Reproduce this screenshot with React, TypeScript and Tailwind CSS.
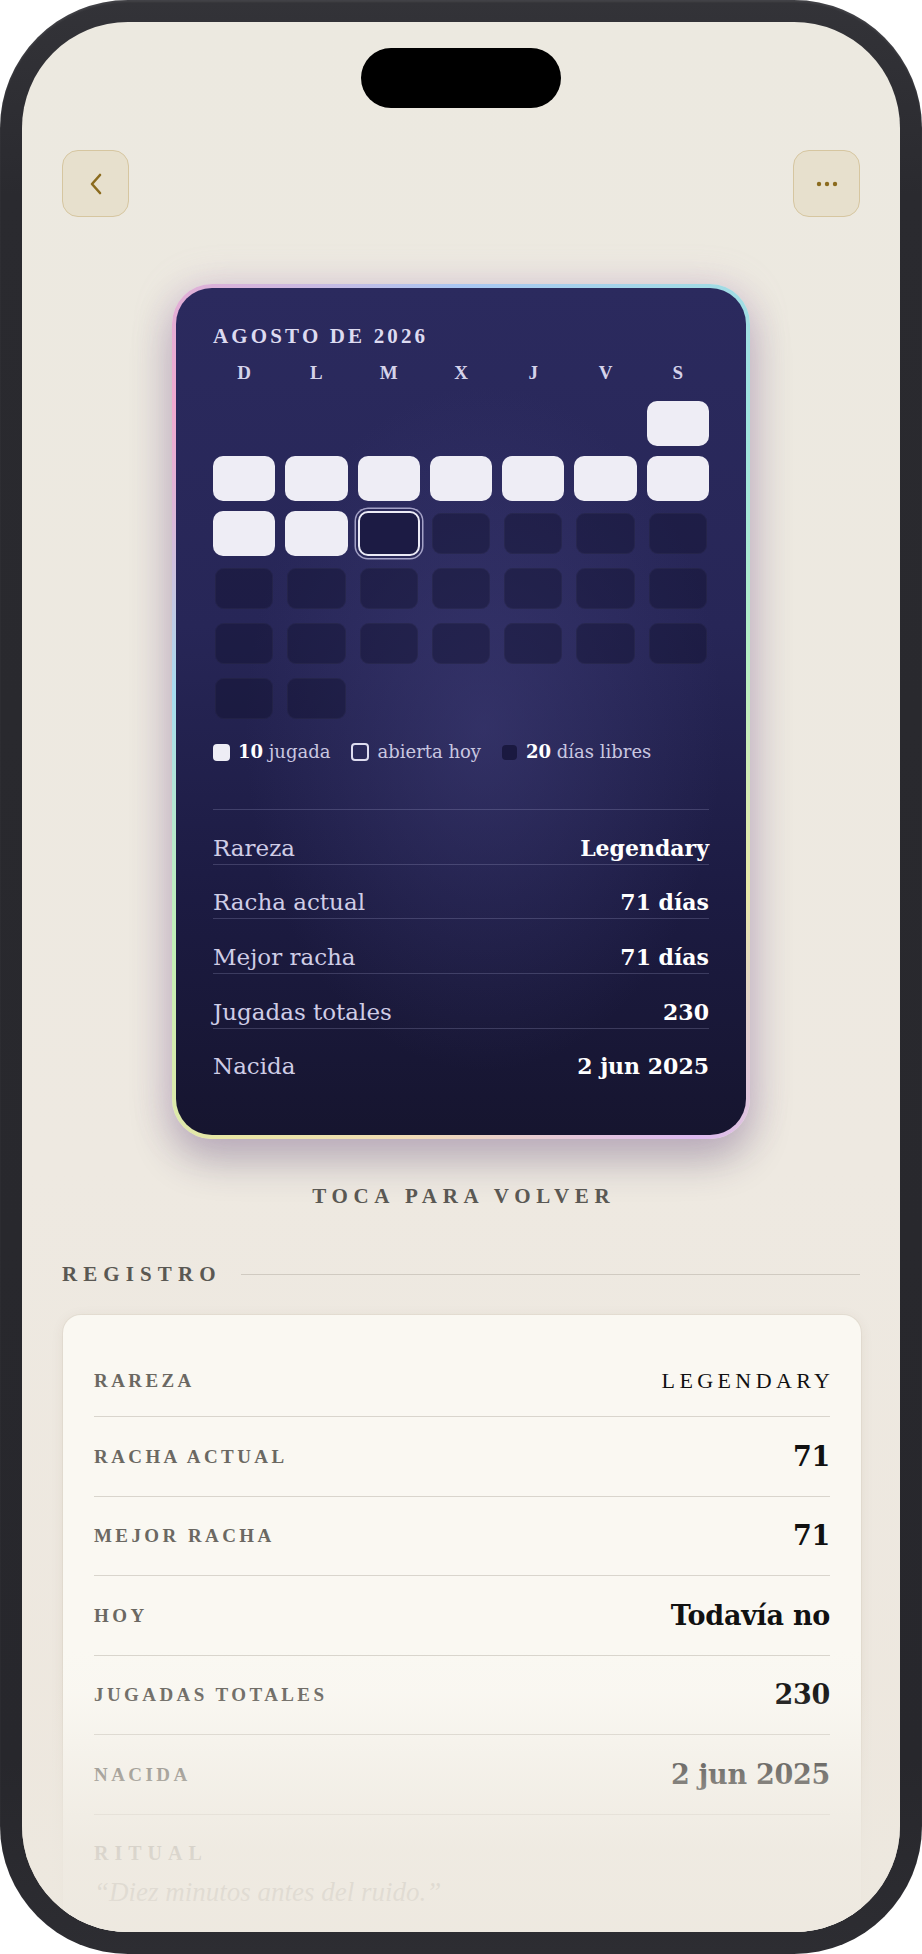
import React from "react";

type Cell = "empty" | "played" | "today" | "free";

const cells: Cell[] = [];
for (let i = 0; i < 6; i++) cells.push("empty");
for (let d = 1; d <= 31; d++) cells.push(d <= 10 ? "played" : d === 11 ? "today" : "free");

const dayLetters = ["D", "L", "M", "X", "J", "V", "S"];

const stats = [
  ["Rareza", "Legendary"],
  ["Racha actual", "71 días"],
  ["Mejor racha", "71 días"],
  ["Jugadas totales", "230"],
  ["Nacida", "2 jun 2025"],
];

const registro = [
  ["RAREZA", "LEGENDARY"],
  ["RACHA ACTUAL", "71"],
  ["MEJOR RACHA", "71"],
  ["HOY", "Todavía no"],
  ["JUGADAS TOTALES", "230"],
  ["NACIDA", "2 jun 2025"],
];

function CalCell({ kind }: { kind: Cell }) {
  if (kind === "empty") return <div />;
  if (kind === "played") return <div className="rounded-[10px] bg-[#eeedf5]" />;
  if (kind === "today")
    return (
      <div className="rounded-[10px] border-2 border-[#ecebf6] bg-[#1c1b44] shadow-[0_0_0_2px_#2a295a,0_0_0_3.5px_rgba(205,203,235,0.75)]" />
    );
  return (
    <div className="m-[2px] rounded-[9px] bg-[rgba(14,14,42,0.4)] shadow-[inset_0_0_0_1px_rgba(255,255,255,0.03)]" />
  );
}

export default function App() {
  return (
    <div className="w-[922px] h-[1954px] bg-white">
      <div className="w-[922px] h-[1954px] rounded-[128px] bg-[linear-gradient(180deg,#333338_0%,#2a2a2f_10%,#27272c_90%,#2d2d32_100%)] p-[22px] shadow-[inset_0_2px_2px_rgba(255,255,255,0.08)]">
        <div className="relative h-full w-full overflow-hidden rounded-[106px] bg-[linear-gradient(180deg,#ece9e0_0%,#eee9e1_60%,#ede7de_100%)]">
          {/* dynamic island */}
          <div className="mx-auto mt-[26px] h-[60px] w-[200px] rounded-full bg-black" />

          {/* header buttons */}
          <div className="mt-[42px] flex justify-between px-[40px]">
            <div className="flex h-[67px] w-[67px] items-center justify-center rounded-[16px] border-[1.5px] border-[#d6c6a0] bg-[#e7e0cd]">
              <svg width="14" height="22" viewBox="0 0 14 22" fill="none">
                <path d="M11 2 L3 11 L11 20" stroke="#8b6b1e" strokeWidth="2.6" strokeLinecap="round" strokeLinejoin="round" />
              </svg>
            </div>
            <div className="flex h-[67px] w-[67px] items-center justify-center rounded-[16px] border-[1.5px] border-[#d6c6a0] bg-[#e7e0cd]">
              <svg width="22" height="6" viewBox="0 0 22 6" fill="#8b6b1e">
                <circle cx="3" cy="3" r="2.2" />
                <circle cx="11" cy="3" r="2.2" />
                <circle cx="19" cy="3" r="2.2" />
              </svg>
            </div>
          </div>

          {/* flipped card */}
          <div className="mx-auto mt-[67px] h-[855px] w-[578px] rounded-[40px] p-[4px] bg-[conic-gradient(from_0deg,#a9c6f3,#9fe3e0_12%,#b6efc4_22%,#e9e8a8_34%,#dcb9ef_42%,#f1dcb6_52%,#e9e6a6_58%,#c2f0b6_64%,#a6dcf0_76%,#f0a9cf_88%,#a9c6f3)] shadow-[0_0_36px_rgba(205,165,215,0.35),0_20px_40px_rgba(55,40,85,0.32)]">
            <div className="h-full w-full rounded-[36px] bg-[radial-gradient(ellipse_at_54%_52%,rgba(70,68,130,0.45)_0%,rgba(70,68,130,0)_55%),linear-gradient(180deg,#2b2a5e_0%,#272657_40%,#1c1b42_72%,#16152f_100%)] px-[37px] pt-[38px]">
              <div className="font-['Liberation_Serif',serif] text-[21px] font-bold leading-none tracking-[0.15em] text-[#dddbf0]">
                AGOSTO DE 2026
              </div>
              <div className="mt-[16px] grid grid-cols-7 gap-x-[10px]">
                {dayLetters.map((d) => (
                  <div key={d} className="text-center font-['Liberation_Serif',serif] text-[19px] font-bold leading-none text-[#d5d3ea]">
                    {d}
                  </div>
                ))}
              </div>
              <div className="mt-[19px] grid grid-cols-7 auto-rows-[45px] gap-[10px]">
                {cells.map((c, i) => (
                  <CalCell key={i} kind={c} />
                ))}
              </div>

              {/* legend */}
              <div className="mt-[21px] flex h-[20px] items-center gap-x-[21px] font-['DejaVu_Serif',serif] text-[18px] leading-none text-[#c9c7e0]">
                <div className="flex items-center gap-x-[8px]">
                  <span className="h-[17px] w-[17px] rounded-[4px] bg-[#eeedf5]" />
                  <span>
                    <b className="font-bold text-white">10</b> jugada
                  </span>
                </div>
                <div className="flex items-center gap-x-[8px]">
                  <span className="h-[18px] w-[18px] rounded-[4px] border-2 border-[#dedcef]" />
                  <span>abierta hoy</span>
                </div>
                <div className="flex items-center gap-x-[9px]">
                  <span className="h-[15px] w-[15px] rounded-[4px] bg-[#1a1940]" />
                  <span>
                    <b className="font-bold text-white">20</b> días libres
                  </span>
                </div>
              </div>

              {/* stats */}
              <div className="mt-[47px] h-px bg-[rgba(200,200,240,0.2)]" />
              {stats.map(([k, v], i) => (
                <div
                  key={k}
                  className={
                    i < stats.length - 1
                      ? "flex h-[54.7px] items-baseline justify-between border-b border-[rgba(200,200,240,0.2)] pt-[26.6px]"
                      : "flex h-[54.7px] items-baseline justify-between pt-[26.6px]"
                  }
                >
                  <span className="font-['DejaVu_Serif',serif] text-[23px] leading-none text-[#cfcde6]">{k}</span>
                  <span className="font-['DejaVu_Serif',serif] text-[22px] font-bold leading-none text-white">{v}</span>
                </div>
              ))}
            </div>
          </div>

          <div className="mt-[47px] pl-[0.26em] text-center font-['Liberation_Serif',serif] text-[21px] font-bold leading-none tracking-[0.27em] text-[#5a5853]">
            TOCA PARA VOLVER
          </div>

          {/* registro header */}
          <div className="mt-[57px] flex items-center gap-x-[19px] px-[40px]">
            <span className="font-['Liberation_Serif',serif] text-[21px] font-bold leading-none tracking-[0.29em] text-[#5a5853]">
              REGISTRO
            </span>
            <div className="h-[1.5px] flex-1 bg-[#d0cac1]" />
          </div>

          {/* registro card */}
          <div className="ml-[41px] mr-[39px] mt-[30px] rounded-[18px] bg-[#faf8f2] px-[31px] pb-[120px] pt-[30px] shadow-[0_2px_14px_rgba(80,60,30,0.07),0_0_0_1px_rgba(200,190,170,0.18)]">
            {registro.map(([k, v], i) => (
              <div
                key={k}
                className={
                  (i === 0 ? "h-[72px] " : "h-[79.5px] ") +
                  "flex items-center justify-between border-b-[1.5px] border-[#d9d5cd]"
                }
              >
                <span className="font-['Liberation_Serif',serif] text-[19px] font-bold leading-none tracking-[0.18em] text-[#6b6862]">
                  {k}
                </span>
                {i === 0 ? (
                  <span className="mr-[-0.2em] font-['Liberation_Serif',serif] text-[22px] leading-none tracking-[0.2em] text-[#111]">
                    {v}
                  </span>
                ) : (
                  <span className="font-['DejaVu_Serif',serif] text-[27px] font-bold leading-none tracking-[-0.01em] text-[#111]">
                    {v}
                  </span>
                )}
              </div>
            ))}
            <div className="mt-[28px] font-['Liberation_Serif',serif] text-[20px] font-bold leading-none tracking-[0.3em] text-[#6b6862]">
              RITUAL
            </div>
            <div className="mt-[16px] font-['Liberation_Serif',serif] text-[27px] italic leading-none text-[#6b6862]">
              “Diez minutos antes del ruido.”
            </div>
          </div>

          {/* bottom fade */}
          <div className="pointer-events-none absolute inset-x-0 bottom-0 h-[282px] bg-[linear-gradient(180deg,rgba(237,232,223,0)_0%,rgba(237,232,223,0.05)_15%,rgba(237,232,223,0.45)_42%,rgba(237,232,223,0.85)_71%,rgba(237,232,223,0.95)_100%)]" />
        </div>
      </div>
    </div>
  );
}
